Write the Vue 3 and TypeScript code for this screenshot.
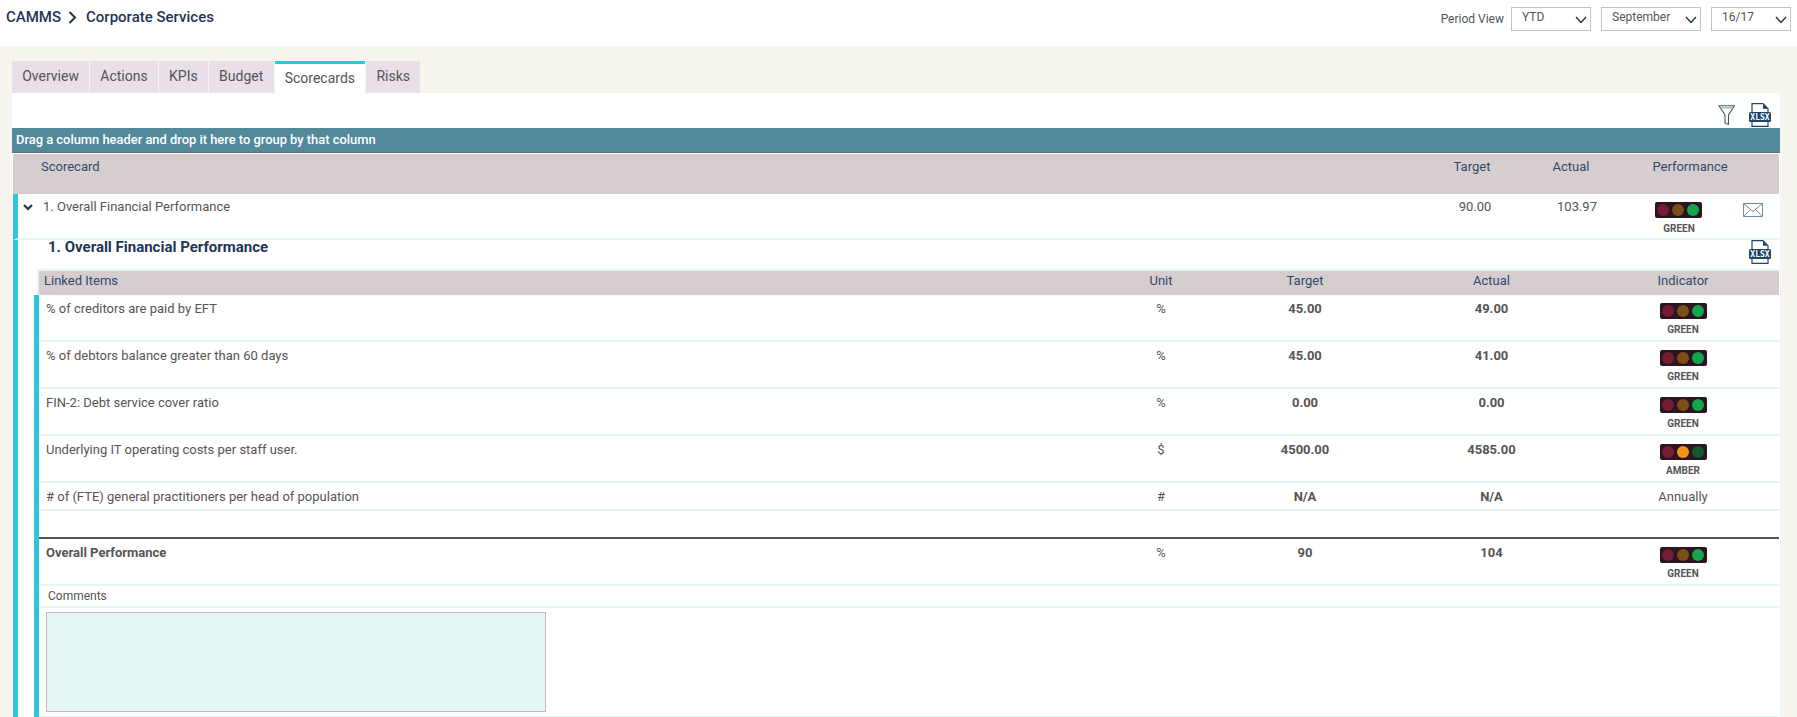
<script setup lang="ts">
interface Item {
  name: string
  unit: string
  target: string
  actual: string
  status?: 'GREEN' | 'AMBER'
  text?: string
}

const tabs: string[] = ['Overview', 'Actions', 'KPIs', 'Budget', 'Scorecards', 'Risks']
const selects: { label: string; wide: boolean }[] = [
  { label: 'YTD', wide: false },
  { label: 'September', wide: true },
  { label: '16/17', wide: false },
]
const items: Item[] = [
  { name: '% of creditors are paid by EFT', unit: '%', target: '45.00', actual: '49.00', status: 'GREEN' },
  { name: '% of debtors balance greater than 60 days', unit: '%', target: '45.00', actual: '41.00', status: 'GREEN' },
  { name: 'FIN-2: Debt service cover ratio', unit: '%', target: '0.00', actual: '0.00', status: 'GREEN' },
  { name: 'Underlying IT operating costs per staff user.', unit: '$', target: '4500.00', actual: '4585.00', status: 'AMBER' },
  { name: '# of (FTE) general practitioners per head of population', unit: '#', target: 'N/A', actual: 'N/A', text: 'Annually' },
]
</script>

<template>
  <div class="page">
    <header class="top">
      <div class="crumbs">
        <span>CAMMS</span>
        <svg class="crumb-arrow" width="9" height="13" viewBox="0 0 9 13"><path d="M1.500 1l5.500 5.500-5.500 5.500" fill="none" stroke="#1f3556" stroke-width="2" /></svg>
        <span>Corporate Services</span>
      </div>
      <div class="period">
        <span class="period-label">Period View</span>
        <div v-for="s in selects" :key="s.label" class="select" :class="{ wide: s.wide }">
          <span>{{ s.label }}</span>
          <svg width="12" height="8" viewBox="0 0 12 8"><path d="M1 1l5 5.500 5-5.500" fill="none" stroke="#1f3556" stroke-width="1.400" /></svg>
        </div>
      </div>
    </header>

    <div class="tabs">
      <div v-for="t in tabs" :key="t" class="tab" :class="{ active: t === 'Scorecards' }">{{ t }}</div>
    </div>

    <main class="panel">
      <div class="tools">
        <svg class="funnel" width="18" height="21" viewBox="0 0 18 21"><path d="M2 .700h15.500L11.500 10v9.500l-3.500-1.500V10z" fill="none" stroke="#3d5c74" stroke-width="1.100" /><path d="M3.500 2.800h12.500" stroke="#9fb2c0" stroke-width="1.400" /></svg>
        <svg width="22" height="24" viewBox="0 0 22 24"><path d="M3 9V.700h11l5 5V9M3 19v4.300h16V19" fill="none" stroke="#1f4565" stroke-width="1.200" /><path d="M14 .700v5h5z" fill="#1f4565" /><rect x="0" y="9" width="22" height="10" rx="1.500" fill="#1f4565" /><text x="11" y="17" text-anchor="middle" class="xlsx-text">XLSX</text></svg>
      </div>
      <div class="group-bar">Drag a column header and drop it here to group by that column</div>

      <div class="outer-head">
        <span class="oh-name">Scorecard</span>
        <span>Target</span>
        <span>Actual</span>
        <span>Performance</span>
      </div>

      <div class="outer-row">
        <svg class="row-chevron" width="10" height="7" viewBox="0 0 10 7"><path d="M1 1l4 4 4-4" fill="none" stroke="#1f3556" stroke-width="2.200" /></svg>
        <span class="or-name">1. Overall Financial Performance</span>
        <span>90.00</span>
        <span>103.97</span>
        <div class="light-cell">
          <div class="light"><i class="red"></i><i class="mid"></i><i class="go"></i></div>
          <b>GREEN</b>
        </div>
        <svg class="mail" width="20" height="14" viewBox="0 0 20 14"><path d="M.5.500h19v13H.5zM.5.500l9.500 8 9.500-8M.5 13.500l7-7M19.500 13.500l-7-7" fill="none" stroke="#6f8ba5" stroke-width="1" /></svg>
      </div>

      <section class="detail">
        <div class="detail-title">
          <h2>1. Overall Financial Performance</h2>
          <svg width="22" height="24" viewBox="0 0 22 24"><path d="M3 9V.700h11l5 5V9M3 19v4.300h16V19" fill="none" stroke="#1f4565" stroke-width="1.200" /><path d="M14 .700v5h5z" fill="#1f4565" /><rect x="0" y="9" width="22" height="10" rx="1.500" fill="#1f4565" /><text x="11" y="17" text-anchor="middle" class="xlsx-text">XLSX</text></svg>
        </div>
        <div class="inner-head grid">
          <span class="head-name">Linked Items</span>
          <span>Unit</span>
          <span>Target</span>
          <span>Actual</span>
          <span>Indicator</span>
        </div>
        <div class="rows">
          <div v-for="it in items" :key="it.name" class="grid irow" :class="{ short: !it.status }">
            <span class="cell-name">{{ it.name }}</span>
            <span>{{ it.unit }}</span>
            <b>{{ it.target }}</b>
            <b>{{ it.actual }}</b>
            <div v-if="it.status" class="light-cell">
              <div class="light" :class="{ amber: it.status === 'AMBER' }"><i class="red"></i><i class="mid"></i><i class="go"></i></div>
              <b>{{ it.status }}</b>
            </div>
            <span v-else>{{ it.text }}</span>
          </div>
          <div class="blank"></div>
          <div class="grid irow total">
            <b class="cell-name">Overall Performance</b>
            <span>%</span>
            <b>90</b>
            <b>104</b>
            <div class="light-cell">
              <div class="light"><i class="red"></i><i class="mid"></i><i class="go"></i></div>
              <b>GREEN</b>
            </div>
          </div>
          <div class="comments-label">Comments</div>
          <div class="comments-wrap"><div class="comments-box"></div></div>
        </div>
      </section>
    </main>
  </div>
</template>

<style>
html, body { margin: 0; background: #f6f6ef; }
</style>

<style scoped>
.page {
  height: 717px;
  overflow: hidden;
  background: #f6f6ef;
  font-family: Roboto, "Liberation Sans", sans-serif;
  font-size: 13px;
  color: #555;
}
.top {
  height: 46px;
  background: #fff;
  display: flex;
  justify-content: space-between;
  padding: 0 6px;
  box-sizing: border-box;
}
.crumbs {
  display: flex;
  align-items: center;
  height: 34px;
  gap: 9px;
  font-size: 15px;
  font-weight: 500;
  color: #1f3556;
}
.crumb-arrow { margin-left: -2px; }
.period { display: flex; gap: 10px; padding-top: 7px; }
.period-label { line-height: 24px; font-size: 12px; margin-right: -3px; color: #4f5560; }
.select {
  width: 80px;
  height: 24px;
  box-sizing: border-box;
  border: 1px solid #c4c4c4;
  display: flex;
  align-items: center;
  justify-content: space-between;
  padding: 0 3px 4px 10px;
  font-size: 12px;
}
.select.wide { width: 100px; }
.select svg { margin-top: 5px; }
.tabs {
  display: flex;
  gap: 1px;
  margin: 15px 0 0 12px;
  height: 32px;
}
.tab {
  background: #e8dfe8;
  padding: 6px 10.200px 0;
  box-sizing: border-box;
  line-height: 18px;
  font-size: 14px;
}
.tab.active {
  background: #fff;
  border-top: 3px solid #30c6d9;
  padding-top: 5px;
}
.panel {
  margin: 0 17px 0 12px;
  background: #fff;
  height: 624px;
}
.tools {
  height: 35px;
  display: flex;
  justify-content: flex-end;
  align-items: flex-start;
  gap: 14px;
  padding: 10px 9px 0 0;
  box-sizing: border-box;
}
.funnel { margin-top: 2px; }
.xlsx-text { font: 700 8px "DejaVu Sans Mono", monospace; fill: #fff; }
.group-bar {
  height: 25px;
  background: #528a9c;
  border-bottom: 1px solid #5f6f75;
  box-sizing: border-box;
  color: #fff;
  font-size: 12.900px;
  font-weight: 500;
  line-height: 23px;
  padding-left: 4px;
}
.outer-head {
  margin: 1px 1px 0 1px;
  height: 40px;
  background: #d6cdcf;
  display: grid;
  grid-template-columns: 1fr 108px 90px 148px 15px;
  color: #2f4a6b;
  padding-top: 5px;
  box-sizing: border-box;
  text-align: center;
  line-height: 16px;
}
.oh-name { text-align: left; padding-left: 28px; }
.outer-row {
  margin: 0 1px;
  height: 46px;
  border-left: 5px solid #30c6d9;
  border-bottom: 2px solid #e5f5f5;
  box-sizing: border-box;
  display: grid;
  grid-template-columns: 25px 1fr 104px 100px 102px 50px;
  text-align: center;
  line-height: 16px;
  padding-top: 5px;
}
.row-chevron { margin: 5px 0 0 5px; }
.or-name { text-align: left; }
.mail { margin: 4px 0 0 14px; }
.light-cell { display: flex; flex-direction: column; align-items: center; }
.light-cell b { font-size: 10px; line-height: 12px; margin-top: 5px; font-weight: 700; }
.outer-row .light-cell { padding-top: 3px; }
.outer-row .light-cell b { margin-left: 2px; }
.light {
  width: 47px;
  height: 16px;
  background: #2a1520;
  border-radius: 2px;
  display: flex;
  align-items: center;
  justify-content: center;
  gap: 3px;
}
.light i { width: 12px; height: 12px; border-radius: 50%; }
.red { background: #741c31; }
.mid { background: #7c4f18; }
.go { background: #14a44d; }
.light.amber .mid { background: #f0941c; }
.light.amber .go { background: #125a2a; }
.detail {
  margin: 0 1px;
  border-left: 5px solid #30c6d9;
  padding-left: 16px;
}
.detail-title {
  height: 29px;
  display: flex;
  justify-content: space-between;
  padding: 0 8px 0 14px;
  box-sizing: border-box;
}
.detail-title h2 {
  margin: 0;
  font-size: 15px;
  font-weight: 700;
  color: #1f3556;
  line-height: 14px;
}
.grid {
  display: grid;
  grid-template-columns: 1061px 122px 166px 207px 176px 7px;
  text-align: center;
  line-height: 16px;
}
.inner-head {
  height: 26px;
  box-sizing: border-box;
  background: #d6cdcf;
  color: #2f4a6b;
  padding-top: 2px;
  margin-left: 3px;
  border-left: 2px solid #e5f5f5;
  border-top: 2px solid #e5f5f5;
}
.head-name { text-align: left; padding-left: 5px; }
.rows { border-left: 5px solid #30c6d9; }
.cell-name { text-align: left; padding-left: 7px; }
.irow {
  height: 47px;
  border-bottom: 2px solid #e5f5f5;
  box-sizing: border-box;
  padding-top: 6px;
}
.irow.short { height: 28px; }
.irow b { font-weight: 700; }
.irow .light-cell { padding-top: 2px; }
.blank { height: 26px; }
.total { border-top: 2px solid #555; height: 49px; }
.comments-label {
  height: 22px;
  border-bottom: 2px solid #e5f5f5;
  box-sizing: border-box;
  font-size: 12px;
  line-height: 20px;
  padding-left: 9px;
}
.comments-wrap { padding: 4px 0 4px 7px; border-bottom: 2px solid #e5f5f5; }
.comments-box {
  width: 500px;
  height: 100px;
  box-sizing: border-box;
  background: #e5f5f5;
  border: 1px solid #bdbdbd;
}
</style>
